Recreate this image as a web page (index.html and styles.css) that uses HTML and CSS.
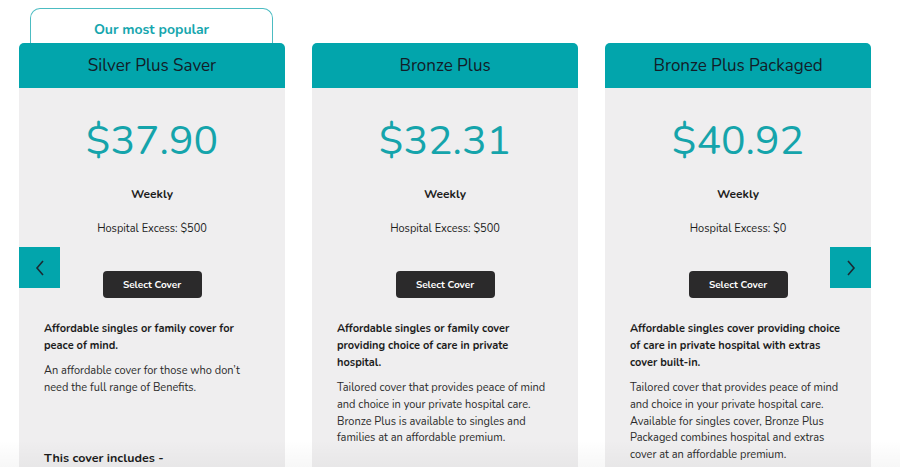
FILE: index.html
```html
<!DOCTYPE html>
<html>
<head>
<meta charset="utf-8">
<link rel="stylesheet" href="styles.css">
</head>
<body>
<div class="carousel">
  <div class="track">
    <div class="card">
      <div class="tab">Our most popular</div>
      <div class="head">Silver Plus Saver</div>
      <div class="body">
        <div class="price">$37.90</div>
        <div class="freq">Weekly</div>
        <div class="excess">Hospital Excess: $500</div>
        <button class="select">Select Cover</button>
        <p class="lead">Affordable singles or family cover for peace of mind.</p>
        <p class="desc">An affordable cover for those who don’t need the full range of Benefits.</p>
        <h4 class="includes">This cover includes -</h4>
      </div>
    </div>
    <div class="card">
      <div class="tab empty"></div>
      <div class="head">Bronze Plus</div>
      <div class="body">
        <div class="price">$32.31</div>
        <div class="freq">Weekly</div>
        <div class="excess">Hospital Excess: $500</div>
        <button class="select">Select Cover</button>
        <p class="lead">Affordable singles or family cover providing choice of care in private hospital.</p>
        <p class="desc">Tailored cover that provides peace of mind and choice in your private hospital care. Bronze Plus is available to singles and families at an affordable premium.</p>
      </div>
    </div>
    <div class="card">
      <div class="tab empty"></div>
      <div class="head">Bronze Plus Packaged</div>
      <div class="body">
        <div class="price">$40.92</div>
        <div class="freq">Weekly</div>
        <div class="excess">Hospital Excess: $0</div>
        <button class="select">Select Cover</button>
        <p class="lead">Affordable singles cover providing choice of care in private hospital with extras cover built-in.</p>
        <p class="desc">Tailored cover that provides peace of mind and choice in your private hospital care. Available for singles cover, Bronze Plus Packaged combines hospital and extras cover at an affordable premium.</p>
      </div>
    </div>
  </div>
  <button class="nav prev" aria-label="Previous">
    <svg width="12" height="18" viewBox="0 0 12 18"><path d="M9 2 L3 9 L9 16" fill="none" stroke="#1b2a33" stroke-width="1.6"/></svg>
  </button>
  <button class="nav next" aria-label="Next">
    <svg width="12" height="18" viewBox="0 0 12 18"><path d="M3 2 L9 9 L3 16" fill="none" stroke="#1b2a33" stroke-width="1.6"/></svg>
  </button>
  <div class="fade"></div>
</div>
</body>
</html>
```
FILE: styles.css
```css
* { box-sizing: border-box; }
html, body { margin: 0; padding: 0; background: #fff; }
body {
  font-family: "Nunito", "Lato", "Noto Sans", sans-serif;
  color: #1c1c1c;
  width: 900px;
  height: 470px;
  overflow: hidden;
}
.carousel {
  position: relative;
  padding: 8px 0 0 19px;
}
.track {
  display: flex;
  gap: 27px;
}
.card {
  width: 266px;
  display: flex;
  flex-direction: column;
}
.tab {
  height: 35px;
  margin: 0 12px 0 11px;
  border: 1px solid #4cbcc2;
  border-bottom: none;
  border-radius: 10px 10px 0 0;
  color: #16a6ae;
  font-weight: 700;
  font-size: 14px;
  display: flex;
  align-items: center;
  justify-content: center;
  padding-top: 6px;
}
.tab.empty { border: none; }
.head {
  height: 45px;
  background: #02a5ac;
  border-radius: 5px 5px 0 0;
  display: flex;
  align-items: center;
  justify-content: center;
  font-size: 17px;
  color: #131c28;
  padding-bottom: 1px;
}
.body {
  background: #efeeef;
  height: 379px;
  overflow: hidden;
  padding: 25px 25px 0 25px;
  display: flex;
  flex-direction: column;
  align-items: center;
}
.price {
  font-size: 41px;
  color: #15a4ab;
  line-height: 56px;
}
.freq {
  font-weight: 700;
  font-size: 12px;
  margin-top: 16px;
  line-height: 18px;
}
.excess {
  font-size: 11px;
  margin-top: 17px;
  line-height: 18px;
}
.select {
  margin-top: 33px;
  width: 99px;
  height: 27px;
  border: none;
  border-radius: 4px;
  background: #2b2a2b;
  color: #fff;
  font-family: inherit;
  font-weight: 700;
  font-size: 10px;
  padding: 0;
  flex: none;
}
.lead {
  align-self: stretch;
  margin: 22px 0 0 0;
  font-weight: 700;
  font-size: 11px;
  line-height: 17px;
}
.desc {
  align-self: stretch;
  margin: 9px 0 0 0;
  font-size: 11px;
  line-height: 16.8px;
  color: #2a2a2a;
}
.includes {
  align-self: stretch;
  margin: auto 0 0 0;
  padding-bottom: 1px;
  font-size: 12.5px;
  font-weight: 700;
  line-height: 16px;
}
.nav {
  position: absolute;
  top: 247px;
  width: 41px;
  height: 41px;
  border: none;
  background: #02a5ac;
  display: flex;
  align-items: center;
  justify-content: center;
  padding: 0;
}
.nav.prev { left: 19px; }
.nav.next { left: 830px; }
.fade {
  position: absolute;
  left: 0;
  right: 0;
  top: 440px;
  height: 27px;
  background: linear-gradient(to bottom, rgba(0,0,0,0), rgba(0,0,0,0.03));
}
```
